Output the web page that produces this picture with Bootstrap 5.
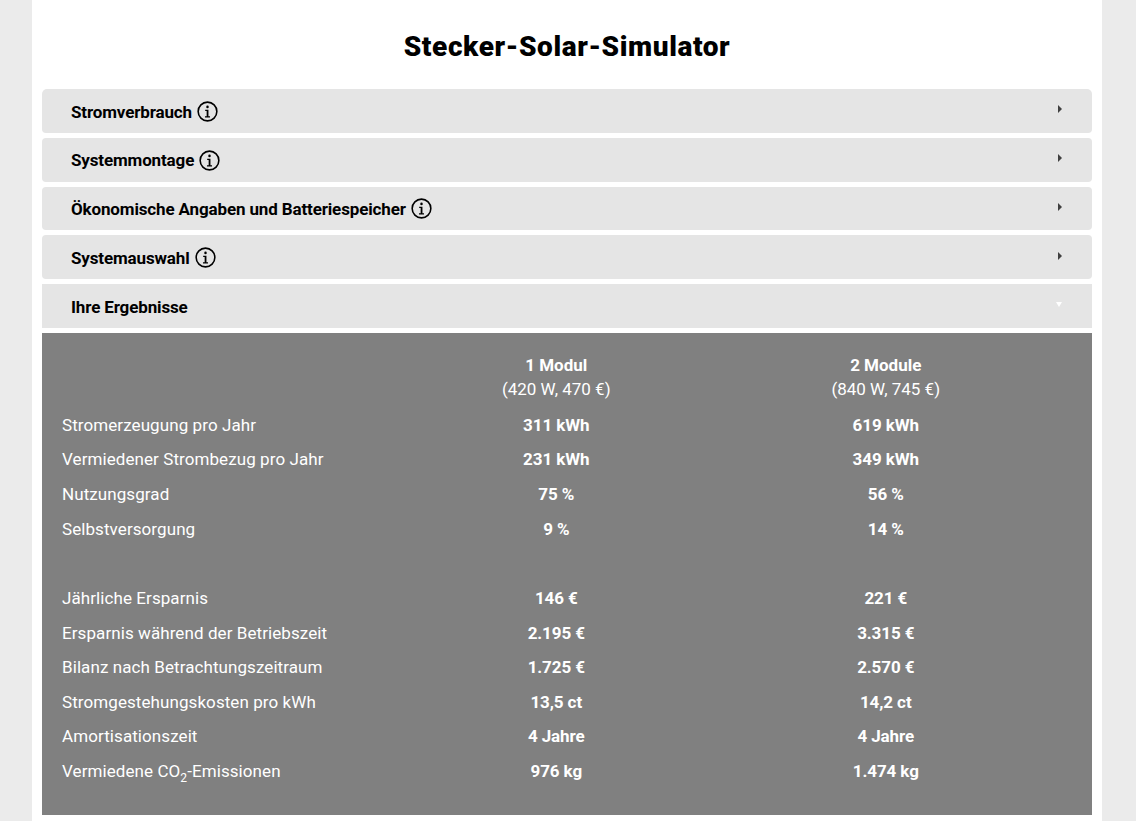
<!DOCTYPE html>
<html lang="de">

<head>
    <meta charset="UTF-8" />
    <title>Stecker-Solar-Simulator</title>
    <meta name="viewport" content="width=device-width, initial-scale=1.0" />
    <link href="https://cdn.jsdelivr.net/npm/bootstrap@5.3.3/dist/css/bootstrap.min.css" rel="stylesheet" />
    <style>
        html { overflow: hidden; }
        body { background: #ebebeb; font-family: Roboto, "Liberation Sans", sans-serif; color: #000; }
        .sim-page { width: 1070px; margin-left: 32px; background: #fff; padding: 0 10px 6px; }
        .sim-title { font-size: 28px; font-weight: 900; letter-spacing: .6px; line-height: 34px; padding: 30px 0 25px; margin: 0; text-align: center; }
        .sim-acc { --bs-accordion-border-width: 0; --bs-accordion-bg: transparent; }
        .sim-acc .accordion-item { margin-bottom: 5px; background: transparent; }
        .sim-acc .accordion-button {
            background: #e5e5e5; color: #000; height: 43.8px; padding: 3px 29px 0; font-size: 17px; font-weight: 700;
            box-shadow: none; border-radius: 4px; letter-spacing: -.14px;
        }
        .sim-acc .accordion-button.sim-open { border-radius: 0; }
        .sim-acc .accordion-button::after {
            background: none; flex: none; width: 0; height: 0; margin-left: auto; margin-right: 0; transform: none;
            border-style: solid; border-width: 4px 0 4px 4.5px; border-color: transparent transparent transparent #404040;
            position: relative; top: -3px; right: 1px;
        }
        .sim-acc .accordion-button.sim-open::after {
            border-width: 5px 3.5px 0; border-color: #fff transparent transparent; top: -3px; right: 1.5px;
        }
        .sim-info { width: 21px; height: 21px; margin-left: 5px; flex: none; position: relative; top: -1px; }
        .sim-panel { background: #808080; color: #fff; margin-top: 5px; padding: 20px 41.5px 26px 20px; }
        .sim-table { --bs-table-bg: transparent; --bs-table-color: #fff; table-layout: fixed; margin: 0; font-size: 17px; letter-spacing: .08px; }
        .sim-table th, .sim-table td { padding: 0; height: 34.67px; vertical-align: middle; font-weight: 400; color: #fff; }
        .sim-table thead th { height: 55px; line-height: 24px; padding-bottom: 7px; letter-spacing: 0; }
        .sim-table .sim-val { text-align: center; font-weight: 700; letter-spacing: -.1px; }
        .sim-table thead b { font-weight: 700; }
        .sim-table sub { font-size: 12px; bottom: -.4em; }
    </style>
</head>

<body>
    <div class="sim-page">
        <h1 class="sim-title">Stecker-Solar-Simulator</h1>

        <div class="accordion sim-acc">
            <div class="accordion-item">
                <button class="accordion-button collapsed" type="button">Stromverbrauch
                    <svg class="sim-info" viewBox="0 0 20 20"><circle cx="10" cy="10" r="8.9" fill="none" stroke="#000" stroke-width="1.5"/><circle cx="10" cy="5.6" r="1.2"/><path d="M7.8 8.3h3.1v6.3h1.5v1.2H7.6v-1.2h1.6V9.5H7.8z"/></svg>
                </button>
            </div>
            <div class="accordion-item">
                <button class="accordion-button collapsed" type="button">Systemmontage
                    <svg class="sim-info" viewBox="0 0 20 20"><circle cx="10" cy="10" r="8.9" fill="none" stroke="#000" stroke-width="1.5"/><circle cx="10" cy="5.6" r="1.2"/><path d="M7.8 8.3h3.1v6.3h1.5v1.2H7.6v-1.2h1.6V9.5H7.8z"/></svg>
                </button>
            </div>
            <div class="accordion-item">
                <button class="accordion-button collapsed" type="button">Ökonomische Angaben und Batteriespeicher
                    <svg class="sim-info" viewBox="0 0 20 20"><circle cx="10" cy="10" r="8.9" fill="none" stroke="#000" stroke-width="1.5"/><circle cx="10" cy="5.6" r="1.2"/><path d="M7.8 8.3h3.1v6.3h1.5v1.2H7.6v-1.2h1.6V9.5H7.8z"/></svg>
                </button>
            </div>
            <div class="accordion-item">
                <button class="accordion-button collapsed" type="button">Systemauswahl
                    <svg class="sim-info" viewBox="0 0 20 20"><circle cx="10" cy="10" r="8.9" fill="none" stroke="#000" stroke-width="1.5"/><circle cx="10" cy="5.6" r="1.2"/><path d="M7.8 8.3h3.1v6.3h1.5v1.2H7.6v-1.2h1.6V9.5H7.8z"/></svg>
                </button>
            </div>
            <div class="accordion-item">
                <button class="accordion-button sim-open" type="button">Ihre Ergebnisse</button>
                <div class="accordion-collapse collapse show">
                    <div class="sim-panel">
                        <table class="table table-borderless sim-table">
                            <thead>
                                <tr>
                                    <th scope="col"></th>
                                    <th scope="col" class="text-center"><b>1 Modul</b><br />(420 W, 470 €)</th>
                                    <th scope="col" class="text-center"><b>2 Module</b><br />(840 W, 745 €)</th>
                                </tr>
                            </thead>
                            <tbody>
                                <tr><td>Stromerzeugung pro Jahr</td><td class="sim-val">311 kWh</td><td class="sim-val">619 kWh</td></tr>
                                <tr><td>Vermiedener Strombezug pro Jahr</td><td class="sim-val">231 kWh</td><td class="sim-val">349 kWh</td></tr>
                                <tr><td>Nutzungsgrad</td><td class="sim-val">75 %</td><td class="sim-val">56 %</td></tr>
                                <tr><td>Selbstversorgung</td><td class="sim-val">9 %</td><td class="sim-val">14 %</td></tr>
                                <tr><td colspan="3"></td></tr>
                                <tr><td>Jährliche Ersparnis</td><td class="sim-val">146 €</td><td class="sim-val">221 €</td></tr>
                                <tr><td>Ersparnis während der Betriebszeit</td><td class="sim-val">2.195 €</td><td class="sim-val">3.315 €</td></tr>
                                <tr><td>Bilanz nach Betrachtungszeitraum</td><td class="sim-val">1.725 €</td><td class="sim-val">2.570 €</td></tr>
                                <tr><td>Stromgestehungskosten pro kWh</td><td class="sim-val">13,5 ct</td><td class="sim-val">14,2 ct</td></tr>
                                <tr><td>Amortisationszeit</td><td class="sim-val">4 Jahre</td><td class="sim-val">4 Jahre</td></tr>
                                <tr><td>Vermiedene CO<sub>2</sub>-Emissionen</td><td class="sim-val">976 kg</td><td class="sim-val">1.474 kg</td></tr>
                            </tbody>
                        </table>
                    </div>
                </div>
            </div>
        </div>
    </div>

    <script src="https://cdn.jsdelivr.net/npm/bootstrap@5.3.3/dist/js/bootstrap.bundle.min.js"></script>
</body>

</html>
